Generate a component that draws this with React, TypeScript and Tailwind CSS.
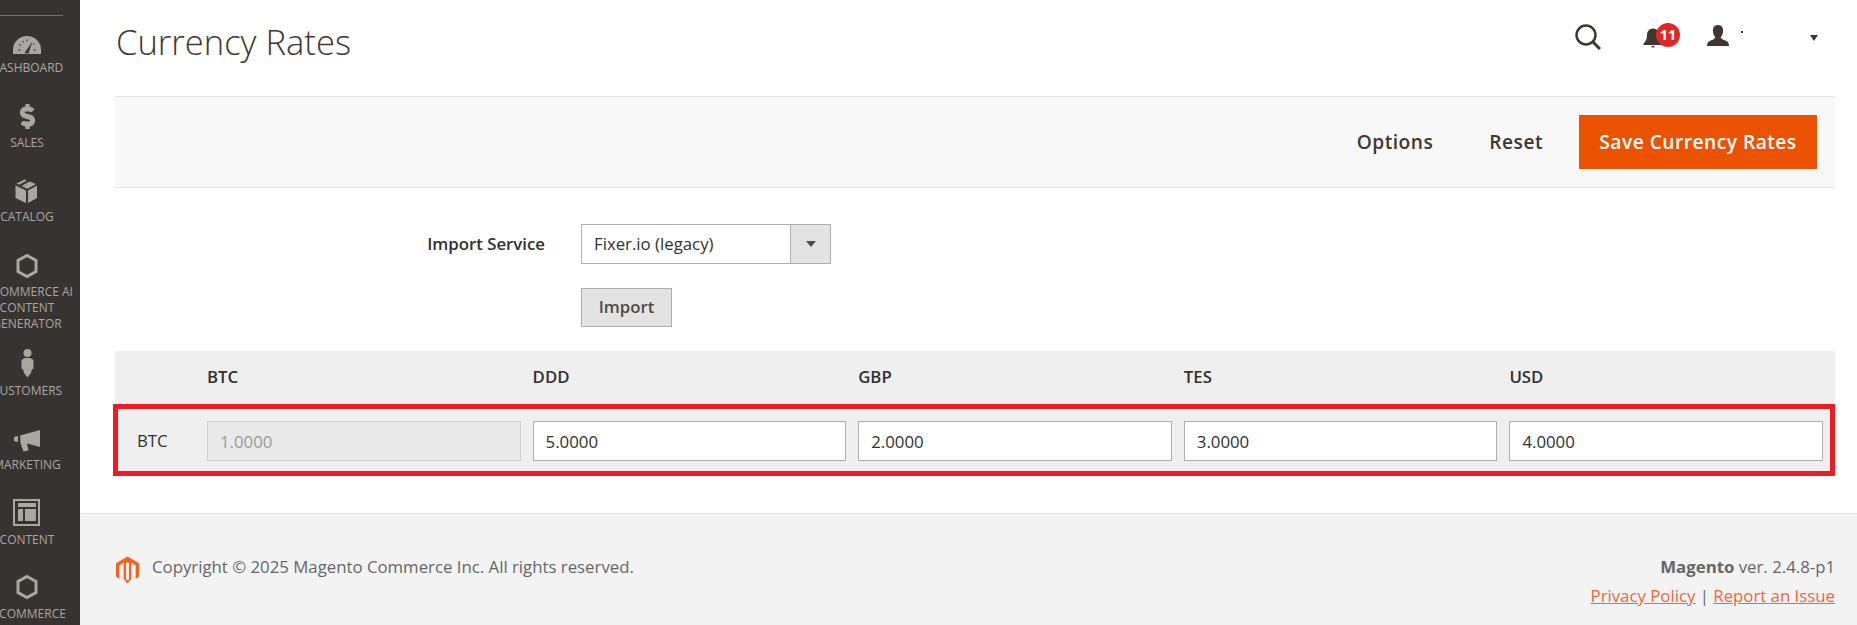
import type { ReactNode } from 'react';
import { FaDollarSign } from 'react-icons/fa';

const iconColor = '#aaa6a0';

const Hexagon = ({ top }: { top: number }) => (
  <svg width="54" height="34" viewBox="0 0 54 34">
    <path
      d={`M27 ${top + 1.5} L36 ${top + 6.5} V${top + 17.5} L27 ${top + 22.5} L18 ${top + 17.5} V${top + 6.5} Z`}
      fill="none"
      stroke={iconColor}
      strokeWidth="3"
    />
  </svg>
);

const navItems: { label: string[]; height: string; icon: ReactNode }[] = [
  {
    label: ['Dashboard'],
    height: 'h-[75px]',
    icon: (
      <svg width="54" height="34" viewBox="0 0 54 34">
        <path d="M13 28 V24 A14 14 0 0 1 41 24 V28 Z" fill={iconColor} />
        <path d="M24.5 27 L32.5 15.5 L28.5 27.5 Z" fill="#373330" />
        <path d="M19 19h2M22.5 15l1 1.5M27 13.5v2M18 24h2.5M36 24h-2.5M34.500 17.500l-1.500 1" stroke="#373330" strokeWidth="1" />
      </svg>
    ),
  },
  {
    label: ['Sales'],
    height: 'h-[74px]',
    icon: (
      <div className="pt-[3px]">
        <FaDollarSign color={iconColor} size={25} stroke={iconColor} strokeWidth={24} />
      </div>
    ),
  },
  {
    label: ['Catalog'],
    height: 'h-[75px]',
    icon: (
      <svg width="54" height="34" viewBox="0 0 54 34">
        <path d="M15.500 10.500 L26 15.500 V28 L15.500 23 Z" fill={iconColor} />
        <path d="M37 10.500 L28 15.500 V28 L37 23 Z" fill={iconColor} />
        <path d="M16.500 8.500 L24.500 4.500 L27 5.500 L19 9.800 Z" fill={iconColor} />
        <path d="M21.500 11 L29.500 6.600 L36 9 L27.500 13.800 Z" fill={iconColor} />
      </svg>
    ),
  },
  {
    label: ['Commerce AI', 'Content', 'Generator'],
    height: 'h-[99px]',
    icon: <Hexagon top={4} />,
  },
  {
    label: ['Customers'],
    height: 'h-[74px]',
    icon: (
      <svg width="54" height="34" viewBox="0 0 54 34">
        <circle cx="27.500" cy="4" r="4" fill={iconColor} />
        <path d="M24.500 9 H30.500 L33.500 11 V20 H32 L31 24 L27.500 28.500 L24 24 L23 20 H21.500 V11 Z" fill={iconColor} />
      </svg>
    ),
  },
  {
    label: ['Marketing'],
    height: 'h-[75px]',
    icon: (
      <svg width="54" height="34" viewBox="0 0 54 34">
        <path d="M14 14 L18 13 V19 L14 18 Z" fill={iconColor} />
        <path d="M20 12.500 L40 7 V24 L27 20.500 L28.500 27.500 L23.500 28.500 L20.500 20 Z" fill={iconColor} />
      </svg>
    ),
  },
  {
    label: ['Content'],
    height: 'h-[74px]',
    icon: (
      <svg width="54" height="34" viewBox="0 0 54 34">
        <rect x="14" y="2" width="25" height="25" fill="none" stroke={iconColor} strokeWidth="2" />
        <rect x="18" y="5" width="18" height="4" fill={iconColor} />
        <rect x="18" y="11" width="5" height="12" fill={iconColor} />
        <rect x="25" y="11" width="11" height="12" fill={iconColor} />
      </svg>
    ),
  },
  {
    label: ['Commerce'],
    height: 'h-[54px]',
    icon: <Hexagon top={3} />,
  },
];

const currencies = ['BTC', 'DDD', 'GBP', 'TES', 'USD'];
const rates = ['1.0000', '5.0000', '2.0000', '3.0000', '4.0000'];

const Sidebar = () => (
  <aside className="w-[80px] shrink-0 bg-[#373330] overflow-hidden">
    <div className="w-[63px] h-[16px] border-b border-[#736e69]" />
    <nav className="w-[54px] mt-[10px]">
      {navItems.map((item) => (
        <div key={item.label[0] + item.height} className={`${item.height} flex flex-col items-center`}>
          <div className="h-[34px] w-[54px] flex justify-center shrink-0">{item.icon}</div>
          {item.label.map((line) => (
            <span
              key={line}
              className={`${
                line.startsWith('Commerce') ? 'ml-[11px]' : ''
              } text-[12px] leading-[16px] uppercase whitespace-nowrap text-[#aaa6a0]`}
            >
              {line}
            </span>
          ))}
        </div>
      ))}
    </nav>
  </aside>
);

const TopActions = () => (
  <div className="flex items-start text-[#41362f]">
    <svg width="26" height="26" viewBox="0 0 26 26" className="mt-[24px] mr-[42px]">
      <circle cx="11" cy="11" r="9.500" fill="none" stroke="#41362f" strokeWidth="2.500" />
      <path d="M18 18 L25 25" stroke="#41362f" strokeWidth="3" />
    </svg>
    <div className="relative mt-[28px] mr-[44px] w-[20px] h-[20px]">
      <svg width="20" height="20" viewBox="0 0 20 20">
        <path d="M10 0.500 C14 0.500 16 3.500 16 7 C16 11 17 13 19.500 15.500 V17 H0.500 V15.500 C3 13 4 11 4 7 C4 3.500 6 0.500 10 0.500 Z" fill="#41362f" />
        <path d="M8 18 H12 L10 20 Z" fill="#41362f" />
      </svg>
      <span className="absolute left-[13px] top-[-5px] w-[24px] h-[24px] rounded-full bg-[#e22626] text-white text-[14.4px] font-bold leading-[24px] text-center">
        11
      </span>
    </div>
    <svg width="22" height="22" viewBox="0 0 22 22" className="mt-[25px]">
      <path d="M11 0 C15 0 16.500 3 16 7 C15.700 9.500 14.500 11 13.800 12.500 C14 14 17 15 19.500 16 C21.500 17 22 19 22 21 H0 C0 19 0.500 17 2.500 16 C5 15 8 14 8.200 12.500 C7.500 11 6.300 9.500 6 7 C5.500 3 7 0 11 0 Z" fill="#41362f" />
    </svg>
    <span className="mt-[31px] ml-[12px] w-[2px] h-[2px] bg-[#41362f]" />
    <span className="mt-[35px] ml-[67px] mr-[17px] w-0 h-0 border-x-[4px] border-t-[6px] border-x-transparent border-t-[#41362f]" />
  </div>
);

const Toolbar = () => (
  <div className="h-[92px] border-y border-[#e3e3e3] bg-[#f8f8f8] flex items-center justify-end pr-[18px] text-[19.2px] font-semibold tracking-[0.48px]">
    <span className="text-[#41362f] mr-[56px]">Options</span>
    <span className="text-[#41362f] mr-[36px]">Reset</span>
    <button className="w-[238px] h-[54px] bg-[#eb5202] text-white font-semibold">Save Currency Rates</button>
  </div>
);

const ImportForm = () => (
  <div className="pt-[36px] pb-[24px]">
    <div className="flex items-center">
      <label className="w-[430px] text-right text-[16.8px] font-semibold text-[#303030]">Import Service</label>
      <div className="ml-[36px] w-[250px] h-[40px] border border-[#adadad] flex items-center">
        <span className="flex-1 pl-[12px] text-[16.8px] text-[#303030]">Fixer.io (legacy)</span>
        <span className="w-[40px] h-full bg-[#e3e3e3] border-l border-[#adadad] flex items-center justify-center">
          <span className="w-0 h-0 border-x-[5px] border-t-[6px] border-x-transparent border-t-[#514943]" />
        </span>
      </div>
    </div>
    <button className="block ml-[466px] mt-[24px] w-[91px] h-[39px] pb-[2px] border border-[#adadad] bg-[#e3e3e3] text-[#514943] text-[16.8px] font-semibold">
      Import
    </button>
  </div>
);

const RatesTable = () => (
  <div className="bg-[#efefef]">
    <div className="h-[53px] flex items-center gap-[12px] pl-[92px] pr-[12px] pb-[2px]">
      {currencies.map((code) => (
        <span key={code} className="flex-1 text-[16.8px] font-semibold text-[#303030]">
          {code}
        </span>
      ))}
    </div>
    <div className="-ml-[2px] h-[72px] border-[5px] border-[#ed1c24] flex items-center pt-[2px] pl-[19px] pr-[7px]">
      <span className="w-[70px] shrink-0 text-[16.8px] text-[#303030]">BTC</span>
      <div className="flex-1 flex gap-[12px]">
        {rates.map((rate, i) => (
          <input
            key={rate}
            readOnly
            disabled={i === 0}
            value={rate}
            className={
              i === 0
                ? 'flex-1 min-w-0 h-[40px] px-[12px] border border-[#cfcfcf] bg-[#e9e9e9] text-[16.8px] text-[#999] opacity-100'
                : 'flex-1 min-w-0 h-[40px] px-[12px] border border-[#adadad] bg-white text-[16.8px] text-[#303030]'
            }
          />
        ))}
      </div>
    </div>
  </div>
);

const Footer = () => (
  <footer className="h-[113px] border-t border-[#e3e3e3] bg-[#f3f3f3] pl-[36px] pr-[22px] flex justify-between text-[16.8px] text-[#666]">
    <div className="flex items-start pt-[42px]">
      <svg width="23" height="28" viewBox="0 0 24 28">
        <path
          d="M12 0 L24 7 V21 L20.500 23 V9 L16 6.500 V23.500 L12 28 L8 23.500 V6.500 L3.500 9 V23 L0 21 V7 Z M10.500 7 V24 L12 25 L13.500 24 V7 L12 6 Z"
          fill="#f26322"
          fillRule="evenodd"
        />
      </svg>
      <span className="ml-[13px] -mt-[1px] leading-[24px]">Copyright © 2025 Magento Commerce Inc. All rights reserved.</span>
    </div>
    <div className="pt-[41px] text-right">
      <div className="leading-[24px]">
        <b className="font-bold">Magento</b> ver. 2.4.8-p1
      </div>
      <div className="mt-[5px] leading-[24px]">
        <a className="underline text-[#f0653a]">Privacy Policy</a> | <a className="underline text-[#f0653a]">Report an Issue</a>
      </div>
    </div>
  </footer>
);

export default function App() {
  return (
    <div className="w-[1857px] h-[625px] flex overflow-hidden bg-white font-['Open_Sans',sans-serif]">
      <Sidebar />
      <main className="flex-1 flex flex-col min-w-0">
        <div className="pl-[35px] pr-[22px]">
          <header className="h-[96px] flex justify-between">
            <h1 className="pt-[18px] pl-[1px] text-[34.6px] leading-[48px] font-light text-[#41362f]">Currency Rates</h1>
            <TopActions />
          </header>
          <Toolbar />
          <ImportForm />
          <RatesTable />
        </div>
        <div className="h-[37px] shrink-0" />
        <Footer />
      </main>
    </div>
  );
}
